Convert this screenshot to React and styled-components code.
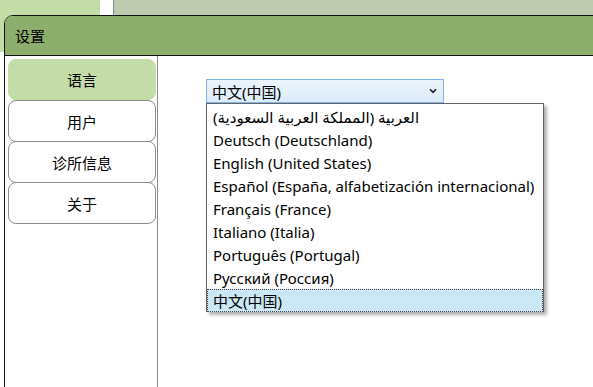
import styled, { createGlobalStyle } from "styled-components";

const GlobalStyle = createGlobalStyle`
  html, body {
    margin: 0;
    padding: 0;
    background: #ffffff;
    overflow: hidden;
  }
  body {
    font-family: "Noto Sans", "Noto Sans CJK SC", "DejaVu Sans", sans-serif;
    font-size: 15px;
    color: #000;
  }
`;

const Desktop = styled.div`
  position: relative;
  width: 593px;
  height: 387px;
  overflow: hidden;
  background: #ffffff;
`;

const BackPanel = styled.div`
  position: absolute;
  left: 0;
  top: 0;
  width: 100px;
  height: 52px;
  background: #c3dca8;
`;

const BackStrip = styled.div`
  position: absolute;
  left: 113px;
  right: 0;
  top: 0;
  height: 15px;
  background: #bfcbb0;
  border-left: 1px solid #8a8a8a;
`;

const Window = styled.div`
  position: absolute;
  left: 4px;
  top: 15px;
  right: -20px;
  bottom: -20px;
  display: flex;
  flex-direction: column;
  background: #ffffff;
  border: 1px solid #111;
  border-top-left-radius: 9px;
  overflow: hidden;
`;

const TitleBar = styled.div`
  height: 39px;
  flex: none;
  display: flex;
  align-items: center;
  padding-left: 10px;
  background: #8dae6d;
  border-bottom: 1px solid #111;
  font-size: 15px;
`;

const Body = styled.div`
  flex: 1;
  display: flex;
`;

const Sidebar = styled.div`
  width: 148px;
  flex: none;
  display: flex;
  flex-direction: column;
  padding: 3px 1px 0 3px;
  border-right: 1px solid #8c8c8c;
`;

const NavButton = styled.div`
  box-sizing: border-box;
  height: ${(p) => (p.$active ? "41px" : "42px")};
  display: flex;
  align-items: center;
  justify-content: center;
  border-radius: 8px;
  border: 1px solid ${(p) => (p.$active ? "#c3dca8" : "#8c8c8c")};
  background: ${(p) => (p.$active ? "#c3dca8" : "#ffffff")};
  & + & + & {
    margin-top: -1px;
  }
`;

const Content = styled.div`
  position: relative;
  flex: 1;
  padding: 23px 0 0 48px;
`;

const Select = styled.div`
  width: 238px;
  height: 24px;
  box-sizing: border-box;
  display: flex;
  align-items: center;
  justify-content: space-between;
  padding: 0 6px 0 5px;
  border: 1px solid #7eb4ea;
  background: linear-gradient(#ecf4fc, #dcecfc);
`;

const Chevron = () => (
  <svg width="8" height="6" viewBox="0 0 8 6">
    <path d="M1 1.2 L4 4.4 L7 1.2" fill="none" stroke="#222" strokeWidth="1.6" />
  </svg>
);

const DropList = styled.ul`
  position: absolute;
  left: 48px;
  top: 47px;
  width: 338px;
  height: 209px;
  box-sizing: border-box;
  margin: 0;
  padding: 1px 0 0 0;
  list-style: none;
  background: #ffffff;
  border: 1px solid #646464;
  box-shadow: 3px 3px 3px rgba(0, 0, 0, 0.3);
`;

const Item = styled.li`
  height: 23px;
  box-sizing: border-box;
  display: flex;
  align-items: center;
  padding-left: 5px;
  white-space: nowrap;
  border: 1px ${(p) => (p.$selected ? "dotted #444" : "solid transparent")};
  background: ${(p) => (p.$selected ? "#cce8f6" : "transparent")};
`;

const languages = [
  "العربية (المملكة العربية السعودية)",
  "Deutsch (Deutschland)",
  "English (United States)",
  "Español (España, alfabetización internacional)",
  "Français (France)",
  "Italiano (Italia)",
  "Português (Portugal)",
  "Русский (Россия)",
  "中文(中国)",
];

const nav = ["语言", "用户", "诊所信息", "关于"];

export default function App() {
  return (
    <>
      <GlobalStyle />
      <Desktop>
        <BackPanel />
        <BackStrip />
        <Window>
          <TitleBar>设置</TitleBar>
          <Body>
            <Sidebar>
              {nav.map((n, i) => (
                <NavButton key={n} $active={i === 0}>
                  {n}
                </NavButton>
              ))}
            </Sidebar>
            <Content>
              <Select>
                <span>中文(中国)</span>
                <Chevron />
              </Select>
              <DropList>
                {languages.map((l, i) => (
                  <Item key={l} $selected={i === languages.length - 1}>
                    {l}
                  </Item>
                ))}
              </DropList>
            </Content>
          </Body>
        </Window>
      </Desktop>
    </>
  );
}
